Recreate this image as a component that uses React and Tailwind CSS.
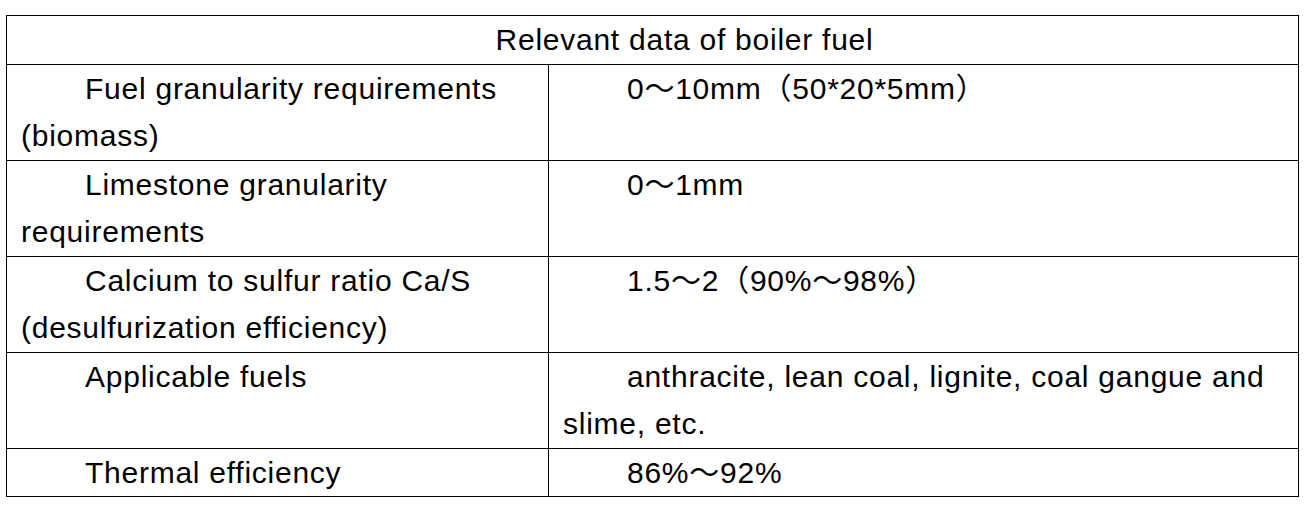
const rows = [
  ['Fuel granularity requirements (biomass)', '0～10mm（50*20*5mm）'],
  ['Limestone granularity requirements', '0～1mm'],
  ['Calcium to sulfur ratio Ca/S (desulfurization efficiency)', '1.5～2（90%～98%）'],
  ['Applicable fuels', 'anthracite, lean coal, lignite, coal gangue and slime, etc.'],
  ['Thermal efficiency', '86%～92%'],
];

const cell = 'border border-black px-[14px] py-0 align-top indent-[64px] text-left';

const App = () => {
  return (
    <div className="min-h-screen bg-white pt-[15px] pl-[6px] text-black">
      <table
        className="w-[1293px] border-collapse text-[30px] leading-[47.5px] tracking-[0.75px] [text-spacing-trim:space-all]"
        style={{ fontFamily: "'Liberation Sans', 'Noto Sans CJK SC', sans-serif" }}
      >
        <colgroup>
          <col className="w-[542px]" />
          <col />
        </colgroup>
        <tbody>
          <tr>
            <td colSpan={2} className="border border-black px-[14px] py-0 indent-[64px] text-center">
              Relevant data of boiler fuel
            </td>
          </tr>
          {rows.map(([label, value]) => (
            <tr key={label}>
              <td className={cell}>{label}</td>
              <td className={cell}>{value}</td>
            </tr>
          ))}
        </tbody>
      </table>
    </div>
  );
};

export default App;
